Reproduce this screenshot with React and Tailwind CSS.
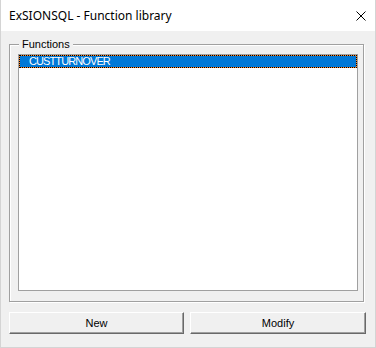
import React from "react";

export default function App() {
  const sans = { fontFamily: '"Liberation Sans", Arial, sans-serif' };
  return (
    <div className="w-[376px] h-[348px] bg-[#f0f0f0] border-x border-b border-[#d4d4d4] flex flex-col" style={sans}>
      <div className="h-[31px] bg-white flex items-center justify-between pl-[8px] pr-[9px] shrink-0">
        <span className="text-[12px] text-black" style={{ fontFamily: '"Noto Sans", "Open Sans", sans-serif' }}>
          ExSIONSQL - Function library
        </span>
        <svg width="10" height="10" viewBox="0 0 10 10" className="block">
          <path d="M0.5 0.5 L9.5 9.5 M9.5 0.5 L0.5 9.5" stroke="#000" strokeWidth="1" fill="none" />
        </svg>
      </div>
      <div className="pl-[8px] pt-[13px]">
        <div className="relative w-[355px] h-[258px] border border-[#a0a0a0] shadow-[1px_1px_0_#fff,inset_1px_1px_0_#fff]">
          <span className="absolute -top-[7px] left-[9px] px-[3px] bg-[#f0f0f0] text-[11px] leading-[13px] text-black">
            Functions
          </span>
          <div className="ml-[8px] mt-[9px] w-[340px] h-[237px] border border-[#a0a0a0] bg-white">
            <div className="w-[338px] h-[13px] bg-[#ff8728]">
              <div className="w-full h-full border border-dotted border-black bg-[#0078d7] bg-clip-padding flex items-center pl-[9px]">
                <span className="text-[11px] leading-[11px] text-white tracking-[-0.9px]">CUSTTURNOVER</span>
              </div>
            </div>
          </div>
        </div>
        <div className="mt-[10px] flex gap-[6px]">
          <div className="w-[175px] h-[22px] border border-t-white border-l-white border-b-[#696969] border-r-[#696969] shadow-[inset_-1px_-1px_0_#a0a0a0] bg-[#f0f0f0] flex items-center justify-center text-[11px] text-black">
            New
          </div>
          <div className="w-[176px] h-[22px] border border-t-white border-l-white border-b-[#696969] border-r-[#696969] shadow-[inset_-1px_-1px_0_#a0a0a0] bg-[#f0f0f0] flex items-center justify-center text-[11px] text-black">
            Modify
          </div>
        </div>
      </div>
    </div>
  );
}
